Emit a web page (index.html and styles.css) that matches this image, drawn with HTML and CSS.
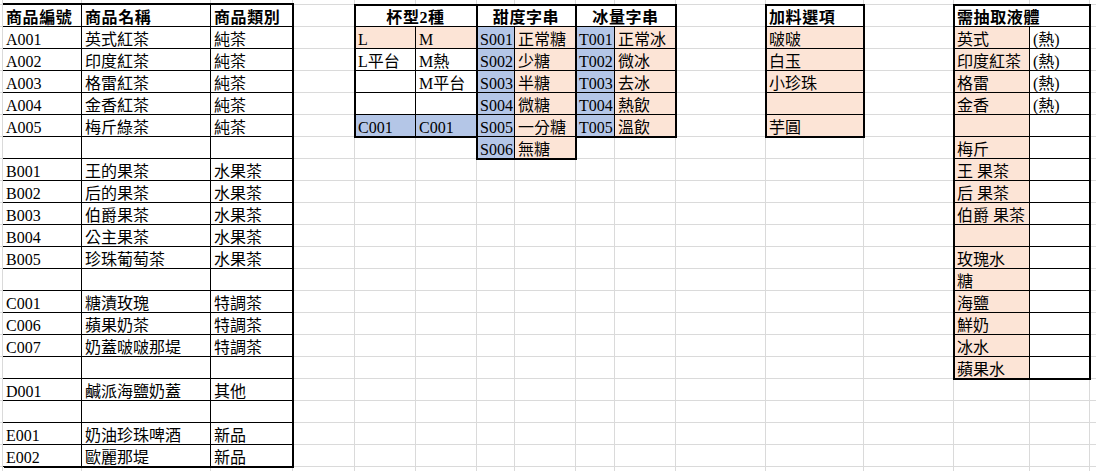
FILE: index.html
```html
<!DOCTYPE html>
<html lang="zh-Hant">
<head>
<meta charset="utf-8">
<title>Sheet</title>
<link rel="stylesheet" href="styles.css">
</head>
<body>
<div class="sheet">
  <div class="tbl products">
    <div class="c h">商品編號</div><div class="c h">商品名稱</div><div class="c h">商品類別</div>
    <div class="c">A001</div><div class="c">英式紅茶</div><div class="c">純茶</div>
    <div class="c">A002</div><div class="c">印度紅茶</div><div class="c">純茶</div>
    <div class="c">A003</div><div class="c">格雷紅茶</div><div class="c">純茶</div>
    <div class="c">A004</div><div class="c">金香紅茶</div><div class="c">純茶</div>
    <div class="c">A005</div><div class="c">梅斤綠茶</div><div class="c">純茶</div>
    <div class="c"></div><div class="c"></div><div class="c"></div>
    <div class="c">B001</div><div class="c">王的果茶</div><div class="c">水果茶</div>
    <div class="c">B002</div><div class="c">后的果茶</div><div class="c">水果茶</div>
    <div class="c">B003</div><div class="c">伯爵果茶</div><div class="c">水果茶</div>
    <div class="c">B004</div><div class="c">公主果茶</div><div class="c">水果茶</div>
    <div class="c">B005</div><div class="c">珍珠葡萄茶</div><div class="c">水果茶</div>
    <div class="c"></div><div class="c"></div><div class="c"></div>
    <div class="c">C001</div><div class="c">糖漬玫瑰</div><div class="c">特調茶</div>
    <div class="c">C006</div><div class="c">蘋果奶茶</div><div class="c">特調茶</div>
    <div class="c">C007</div><div class="c">奶蓋啵啵那堤</div><div class="c">特調茶</div>
    <div class="c"></div><div class="c"></div><div class="c"></div>
    <div class="c">D001</div><div class="c">鹹派海鹽奶蓋</div><div class="c">其他</div>
    <div class="c"></div><div class="c"></div><div class="c"></div>
    <div class="c">E001</div><div class="c">奶油珍珠啤酒</div><div class="c">新品</div>
    <div class="c">E002</div><div class="c">歐麗那堤</div><div class="c">新品</div>
  </div>

  <div class="tbl cups">
    <div class="c h span2 center">杯型2種</div>
    <div class="c peach">L</div><div class="c peach">M</div>
    <div class="c">L平台</div><div class="c">M熱</div>
    <div class="c"></div><div class="c">M平台</div>
    <div class="c"></div><div class="c"></div>
    <div class="c blue">C001</div><div class="c blue">C001</div>
  </div>

  <div class="tbl sweet">
    <div class="c h span2 center">甜度字串</div>
    <div class="c blue">S001</div><div class="c peach">正常糖</div>
    <div class="c blue">S002</div><div class="c peach">少糖</div>
    <div class="c blue">S003</div><div class="c peach">半糖</div>
    <div class="c blue">S004</div><div class="c peach">微糖</div>
    <div class="c blue">S005</div><div class="c peach">一分糖</div>
    <div class="c blue">S006</div><div class="c peach">無糖</div>
  </div>

  <div class="tbl ice">
    <div class="c h span2 center">冰量字串</div>
    <div class="c blue">T001</div><div class="c peach">正常冰</div>
    <div class="c blue">T002</div><div class="c peach">微冰</div>
    <div class="c blue">T003</div><div class="c peach">去冰</div>
    <div class="c blue">T004</div><div class="c peach">熱飲</div>
    <div class="c blue">T005</div><div class="c peach">溫飲</div>
  </div>

  <div class="tbl toppings">
    <div class="c h">加料選項</div>
    <div class="c peach">啵啵</div>
    <div class="c peach">白玉</div>
    <div class="c peach">小珍珠</div>
    <div class="c peach"></div>
    <div class="c peach">芋圓</div>
  </div>

  <div class="tbl liquids">
    <div class="c h span2">需抽取液體</div>
    <div class="c peach">英式</div><div class="c">(熱)</div>
    <div class="c peach">印度紅茶</div><div class="c">(熱)</div>
    <div class="c peach">格雷</div><div class="c">(熱)</div>
    <div class="c peach">金香</div><div class="c">(熱)</div>
    <div class="c peach"></div><div class="c"></div>
    <div class="c peach">梅斤</div><div class="c"></div>
    <div class="c peach">王 果茶</div><div class="c"></div>
    <div class="c peach">后 果茶</div><div class="c"></div>
    <div class="c peach">伯爵 果茶</div><div class="c"></div>
    <div class="c peach"></div><div class="c"></div>
    <div class="c peach">玫瑰水</div><div class="c"></div>
    <div class="c peach">糖</div><div class="c"></div>
    <div class="c peach">海鹽</div><div class="c"></div>
    <div class="c peach">鮮奶</div><div class="c"></div>
    <div class="c peach">冰水</div><div class="c"></div>
    <div class="c peach">蘋果水</div><div class="c"></div>
  </div>
</div>
</body>
</html>
```

FILE: styles.css
```css
html, body {
  margin: 0;
  padding: 0;
  background: #fff;
}

.sheet {
  width: 1096px;
  height: 471px;
  overflow: hidden;
  display: grid;
  grid-template-columns: 3px 79px 129px 82px 62px 61px 61px 38px 61px 39px 61px 90px 98px 90px 76px 60px 1fr;
  grid-template-rows: 5px repeat(22, 22px);
  font-family: "Liberation Serif", "Noto Sans CJK TC", serif;
  font-size: 16px;
  color: #000;
  background-color: #fff;
  background-image:
    linear-gradient(#dadada, #dadada),
    linear-gradient(#dadada, #dadada),
    linear-gradient(#dadada, #dadada),
    linear-gradient(#dadada, #dadada),
    linear-gradient(#dadada, #dadada),
    linear-gradient(#dadada, #dadada),
    linear-gradient(#dadada, #dadada),
    linear-gradient(#dadada, #dadada),
    linear-gradient(#dadada, #dadada),
    linear-gradient(#dadada, #dadada),
    linear-gradient(#dadada, #dadada),
    linear-gradient(#dadada, #dadada),
    linear-gradient(#dadada, #dadada),
    linear-gradient(#dadada, #dadada),
    linear-gradient(#dadada, #dadada),
    linear-gradient(#dadada, #dadada),
    linear-gradient(to bottom, #dadada 1px, transparent 1px);
  background-size:
    1px 100%, 1px 100%, 1px 100%, 1px 100%, 1px 100%, 1px 100%, 1px 100%, 1px 100%,
    1px 100%, 1px 100%, 1px 100%, 1px 100%, 1px 100%, 1px 100%, 1px 100%, 1px 100%,
    100% 22px;
  background-position:
    2px 0, 81px 0, 210px 0, 292px 0, 354px 0, 415px 0, 476px 0, 514px 0,
    575px 0, 614px 0, 675px 0, 765px 0, 863px 0, 953px 0, 1029px 0, 1089px 0,
    0 4px;
  background-repeat:
    no-repeat, no-repeat, no-repeat, no-repeat, no-repeat, no-repeat, no-repeat, no-repeat,
    no-repeat, no-repeat, no-repeat, no-repeat, no-repeat, no-repeat, no-repeat, no-repeat,
    repeat;
}

.tbl {
  display: grid;
  grid-auto-rows: 22px;
  outline: 2px solid #000;
  outline-offset: -1px;
}

.products {
  grid-column: 2 / 5;
  grid-row: 2 / 23;
  grid-template-columns: 79px 129px 82px;
  outline: none;
  box-shadow: 0 -2px 0 #000, 1px 1px 0 #000, 1px -2px 0 #000;
}

.cups {
  grid-column: 6 / 8;
  grid-row: 2 / 8;
  grid-template-columns: 61px 61px;
}

.sweet {
  grid-column: 8 / 10;
  grid-row: 2 / 9;
  grid-template-columns: 38px 61px;
}

.ice {
  grid-column: 10 / 12;
  grid-row: 2 / 8;
  grid-template-columns: 39px 61px;
}

.toppings {
  grid-column: 13 / 14;
  grid-row: 2 / 8;
  grid-template-columns: 98px;
}

.liquids {
  grid-column: 15 / 17;
  grid-row: 2 / 19;
  grid-template-columns: 76px 60px;
}

.c {
  box-sizing: border-box;
  border-right: 1px solid #000;
  border-bottom: 1px solid #000;
  background: #fff;
  padding: 2px 0 0 3px;
  line-height: 21px;
  white-space: nowrap;
}

.h {
  font-weight: bold;
  letter-spacing: 0.6px;
}

.span2 {
  grid-column: 1 / -1;
}

.center {
  text-align: center;
  padding-left: 0;
}

.peach {
  background: #fce4d6;
}

.blue {
  background: #b4c6e7;
}
```
